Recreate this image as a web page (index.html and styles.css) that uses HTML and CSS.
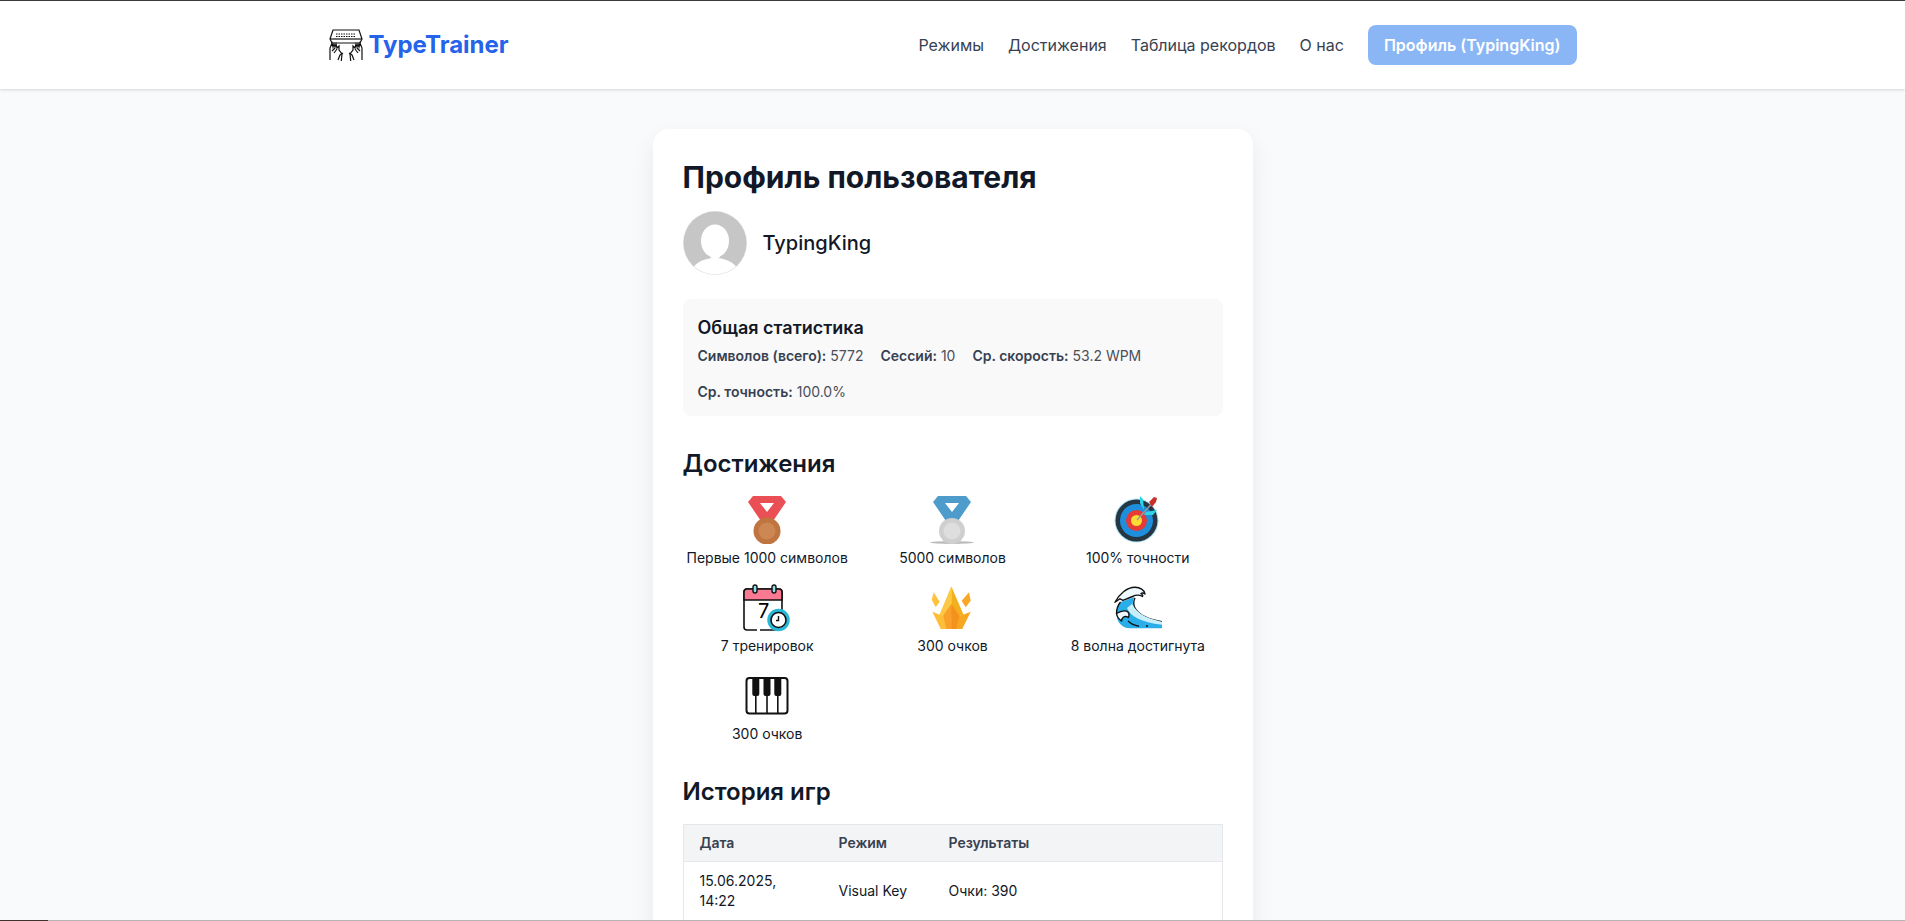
FILE: index.html
```html
<!DOCTYPE html>
<html lang="ru">
<head>
    <meta charset="UTF-8">
    <title>TypeTrainer</title>
    <link rel="stylesheet" href="styles.css">
</head>
<body>
<header class="header">
    <div class="headerInner">
        <a class="logo" href="#">
            <svg class="logoIcon" viewBox="0 0 34 32" fill="none" stroke="#111" stroke-width="1.2">
                <path d="M4 1h26l3 9-2 4H3l-2-4z" fill="#fff"/>
                <path d="M1 10h32" />
                <path d="M7 5h20M7 7.500h20" stroke-dasharray="1.500 1"/>
                <path d="M1 31V19l2-5 1 4 1-3 1 3 1-3 1 4 2-2v4l3 4-1 10M33 31V19l-2-5-1 4-1-3-1 3-1-3-1 4-2-2v4l-3 4 1 10"/>
                <path d="M9 31l2-5 3-2M25 31l-2-5-3-2"/>
                <path d="M3 22l3-3M5 24l3-4M31 22l-3-3M29 24l-3-4"/>
            </svg>
            <span class="logoText">TypeTrainer</span>
        </a>
        <nav class="nav">
            <a href="#">Режимы</a>
            <a href="#">Достижения</a>
            <a href="#">Таблица рекордов</a>
            <a href="#">О нас</a>
            <button class="btnProfile">Профиль (TypingKing)</button>
        </nav>
    </div>
</header>

<main class="card">
    <h1 class="pageTitle">Профиль пользователя</h1>
    <div class="user">
        <svg class="avatar" viewBox="0 0 64 64">
            <defs><clipPath id="avatarClip"><circle cx="32" cy="32" r="31.500"/></clipPath></defs>
            <circle cx="32" cy="32" r="32" fill="#e4e4e4"/>
            <g clip-path="url(#avatarClip)">
                <circle cx="32" cy="32" r="32" fill="#c6c6c6"/>
                <ellipse cx="32" cy="30" rx="14" ry="16.500" fill="#fff"/>
                <path d="M27 40h10v6l-5 3-5-3z" fill="#fff"/>
                <ellipse cx="32" cy="63" rx="24" ry="16" fill="#fff"/>
            </g>
        </svg>
        <span class="userName">TypingKing</span>
    </div>

    <section class="statsBox">
        <h3 class="statsTitle">Общая статистика</h3>
        <div class="statsRow">
            <p><b>Символов (всего):</b> 5772</p>
            <p><b>Сессий:</b> 10</p>
            <p><b>Ср. скорость:</b> 53.2 WPM</p>
            <p><b>Ср. точность:</b> 100.0%</p>
        </div>
    </section>

    <h2 class="sectionTitle">Достижения</h2>
    <div class="achievements">
        <div class="achievement">
            <svg class="achIcon" viewBox="0 0 48 48">
                <path d="M5 6l5-6h28l5 6-13 19H18z" fill="#ea4f55"/>
                <path d="M17 7h14l-7 9z" fill="#fff"/>
                <circle cx="24" cy="35" r="13.500" fill="#c0743f"/>
                <circle cx="24" cy="35" r="8.500" fill="#cd8752"/>
            </svg>
            <span>Первые 1000 символов</span>
        </div>
        <div class="achievement">
            <svg class="achIcon" viewBox="0 0 48 48">
                <ellipse cx="24" cy="46.500" rx="22" ry="1.500" fill="#bbb"/>
                <path d="M5 6l5-6h28l5 6-13 19H18z" fill="#4d9ccc"/>
                <path d="M17 7h14l-7 9z" fill="#fff"/>
                <circle cx="24" cy="35" r="13" fill="#cfcfcf"/>
                <circle cx="24" cy="35" r="8.500" fill="#dedede"/>
            </svg>
            <span>5000 символов</span>
        </div>
        <div class="achievement">
            <svg class="achIcon" viewBox="0 0 48 48">
                <circle cx="22.500" cy="24.500" r="22" fill="#a8e2f5"/>
                <circle cx="22.500" cy="24.500" r="21" fill="#263743"/>
                <circle cx="22.500" cy="24.500" r="16.500" fill="#1e8fdc"/>
                <circle cx="22.500" cy="24.500" r="10.500" fill="#e53a35"/>
                <circle cx="22.500" cy="24.500" r="5.500" fill="#fbdc33"/>
                <path d="M23 24L42 3" stroke="#9a9a9a" stroke-width="1.500"/>
                <path d="M35 6l5-5 3 1-1 4-4 5z" fill="#c9302c"/>
                <path d="M26 0l3 3 1 11-4-7zM32 16l11-2-4 5-9 0z" fill="#2fd4e8"/>
            </svg>
            <span>100% точности</span>
        </div>
        <div class="achievement">
            <svg class="achIcon" viewBox="0 0 48 48">
                <rect x="1" y="5" width="38" height="41" rx="3" fill="#fff" stroke="#111" stroke-width="1.600"/>
                <path d="M1 8a3 3 0 0 1 3-3h32a3 3 0 0 1 3 3v8H1z" fill="#fb7a93" stroke="#111" stroke-width="1.600"/>
                <rect x="10" y="1" width="4" height="8" rx="2" fill="#8fdde6" stroke="#111" stroke-width="1.400"/>
                <rect x="29" y="1" width="4" height="8" rx="2" fill="#8fdde6" stroke="#111" stroke-width="1.400"/>
                <text class="calNum" x="15" y="34">7</text>
                <path d="M14 46h3" stroke="#fff" stroke-width="2"/>
                <circle cx="35.500" cy="36" r="9.500" fill="#fff" stroke="#28b8d8" stroke-width="3.500"/>
                <circle cx="35.500" cy="36" r="7.500" fill="#fff" stroke="#111" stroke-width="1.600"/>
                <path d="M35.500 32v4.500h-2.500" fill="none" stroke="#111" stroke-width="1.400"/>
            </svg>
            <span>7 тренировок</span>
        </div>
        <div class="achievement">
            <svg class="achIcon" viewBox="0 0 48 48">
                <path d="M5.700 8.300l6 9.400-4 5.600-4-7.600z" fill="#fdc23e"/>
                <path d="M41 8.300l1.700 8.400-5 6.600-4-6.600z" fill="#f9a825"/>
                <path d="M23.300 2.300L11 31.700h12.300z" fill="#fdc846"/>
                <path d="M23.300 2.300L36 31.700H23.300z" fill="#f2b01e"/>
                <path d="M4.300 27.700l10 4L23.300 20v25H12.700z" fill="#fdbf3a"/>
                <path d="M42.700 27.700l-10 4L23.300 20v25h11z" fill="#f7a823"/>
                <path d="M23.300 20l-8 11.700 3 13.300h5z" fill="#f9a02a"/>
                <path d="M23.300 20l8 11.700-3 13.300h-5z" fill="#f5921e"/>
            </svg>
            <span>300 очков</span>
        </div>
        <div class="achievement">
            <svg class="achIcon" viewBox="0 0 48 48">
                <path d="M48 44.300H16C8 44.300 2.500 38 2.500 29.500c0-4.500 1.500-8.500 4-11.500l14-5c-2 4-2.500 8 0 11.500 4 6.500 13 11.500 27.500 13.500z" fill="#29aeea"/>
                <path d="M21 14c-2 4-2 7 .500 11 4 6 12 10.500 26.500 12.700" fill="none" stroke="#111" stroke-width="1.400"/>
                <path d="M13 24c3 8 14 14.500 35 16.700v-3C35 35 24 31 18 20z" fill="#c6eefb"/>
                <path d="M1 18.300C5 10 13 3.300 21 3.300c5 0 9.500 2.500 10 6.700-1.500-1-3-1.200-4-.5 1.500 1 2 2 1.500 3-3-1.800-7-1.500-10 0-4 1.500-7 2.800-9.500 3.800L6 14.800z" fill="#eef9fd" stroke="#111" stroke-width="1.400" stroke-linejoin="round"/>
                <path d="M2.500 29.500c3-1.800 7-3.300 10-2.300 2.500 1 3 3.500 2 6.300-2-1.300-3.500-1.300-5-.5-1 1-2 2.500-2 4-3-2-4.500-4.500-5-7.500z" fill="#eef9fd" stroke="#111" stroke-width="1.400" stroke-linejoin="round"/>
                <path d="M2.500 29.500c0-4.500 1.500-8.500 4-11.500M14 37c3 3 7 4.500 11 5.300M32 42h2" fill="none" stroke="#111" stroke-width="1.400"/>
            </svg>
            <span>8 волна достигнута</span>
        </div>
        <div class="achievement">
            <svg class="achIcon" viewBox="0 0 48 48">
                <rect x="3.500" y="6" width="41" height="35.500" rx="3" fill="#fff" stroke="#111" stroke-width="2"/>
                <path d="M12.800 6v35M24 6v35M34.800 6v35" stroke="#111" stroke-width="1.600"/>
                <path d="M9.300 6h7v16a2 2 0 0 1-2 2h-3a2 2 0 0 1-2-2zM20.500 6h7v16a2 2 0 0 1-2 2h-3a2 2 0 0 1-2-2zM31.300 6h7v16a2 2 0 0 1-2 2h-3a2 2 0 0 1-2-2z" fill="#111"/>
            </svg>
            <span>300 очков</span>
        </div>
    </div>

    <h2 class="sectionTitle historyTitle">История игр</h2>
    <table class="history">
        <thead>
            <tr>
                <th class="colDate">Дата</th>
                <th class="colMode">Режим</th>
                <th>Результаты</th>
            </tr>
        </thead>
        <tbody>
            <tr>
                <td>15.06.2025, 14:22</td>
                <td>Visual Key</td>
                <td>Очки: 390</td>
            </tr>
        </tbody>
    </table>
</main>

<div class="bottomBar"><div class="bottomFill"></div></div>
</body>
</html>
```

FILE: styles.css
```css
html, body {
    height: 100%;
    overflow: hidden;
}
body {
    margin: 0;
    background-color: #f9fafb;
    font-family: Inter, "Noto Sans", sans-serif;
    color: #111827;
}
a {
    text-decoration: none;
}
.header {
    background-color: #fff;
    border-top: 1px solid #3a3a3a;
    box-shadow: 0 1px 3px rgba(0, 0, 0, 0.15);
}
.headerInner {
    max-width: 1280px;
    box-sizing: border-box;
    margin: 0 auto;
    padding: 0 16px;
    height: 88px;
    display: flex;
    align-items: center;
    justify-content: space-between;
}
.logo {
    display: flex;
    align-items: center;
    gap: 6px;
    color: #2563eb;
    font-size: 24px;
    font-weight: 700;
}
.logoIcon {
    width: 34px;
    height: 32px;
}
.logoText {
    padding-bottom: 2px;
}
.nav {
    display: flex;
    align-items: center;
    gap: 24px;
}
.nav a {
    color: #374151;
    font-size: 16px;
}
.btnProfile {
    background-color: #8ab6f6;
    color: #fff;
    border: none;
    border-radius: 8px;
    padding: 0 16px;
    height: 40px;
    font-family: inherit;
    font-size: 16px;
    font-weight: 600;
}
.card {
    box-sizing: border-box;
    width: 600px;
    margin: 40px auto 0;
    padding: 30px;
    background-color: #fff;
    border-radius: 16px;
    box-shadow: 0 10px 25px rgba(0, 0, 0, 0.07);
}
.pageTitle {
    margin: 0 0 16px;
    font-size: 30px;
    line-height: 36px;
    font-weight: 700;
}
.user {
    display: flex;
    align-items: center;
    gap: 16px;
    margin-bottom: 24px;
}
.avatar {
    width: 64px;
    height: 64px;
}
.userName {
    font-size: 20px;
    font-weight: 500;
}
.statsBox {
    background-color: #f9f9f9;
    border-radius: 8px;
    padding: 15px 15px 14px;
    margin-bottom: 32px;
}
.statsTitle {
    margin: 0 0 4px;
    font-size: 18px;
    line-height: 28px;
    font-weight: 600;
}
.statsRow {
    display: flex;
    flex-wrap: wrap;
    gap: 16px 17px;
    font-size: 14px;
    line-height: 20px;
    color: #4a4f59;
}
.statsRow p {
    margin: 0;
}
.statsRow b {
    font-weight: 600;
    color: #374151;
}
.sectionTitle {
    margin: 0 0 16px;
    font-size: 24px;
    line-height: 32px;
    font-weight: 600;
}
.achievements {
    display: grid;
    grid-template-columns: repeat(3, 1fr);
    gap: 16px;
}
.achievement {
    display: flex;
    flex-direction: column;
    align-items: center;
    font-size: 14px;
    line-height: 20px;
    gap: 4px;
}
.achIcon {
    width: 48px;
    height: 48px;
}
.calNum {
    font-family: Inter, sans-serif;
    font-size: 20px;
}
.historyTitle {
    margin-top: 32px;
}
.history {
    width: 100%;
    border-collapse: collapse;
    font-size: 14px;
    line-height: 20px;
    border-left: 1px solid #e5e7eb;
    border-right: 1px solid #e5e7eb;
}
.history th, .history td {
    border-top: 1px solid #e5e7eb;
    border-bottom: 1px solid #e5e7eb;
    padding: 9px 16px;
    text-align: left;
}
.history th {
    padding: 8px 16px;
    background-color: #f3f4f6;
    color: #374151;
    font-weight: 600;
}
.colDate {
    width: 107px;
}
.colMode {
    width: 78px;
}
.bottomBar {
    position: fixed;
    left: 0;
    right: 0;
    bottom: 0;
    height: 1px;
    background-color: #b5b5b5;
}
.bottomFill {
    width: 48px;
    height: 1px;
    background-color: #3f3028;
}
```
